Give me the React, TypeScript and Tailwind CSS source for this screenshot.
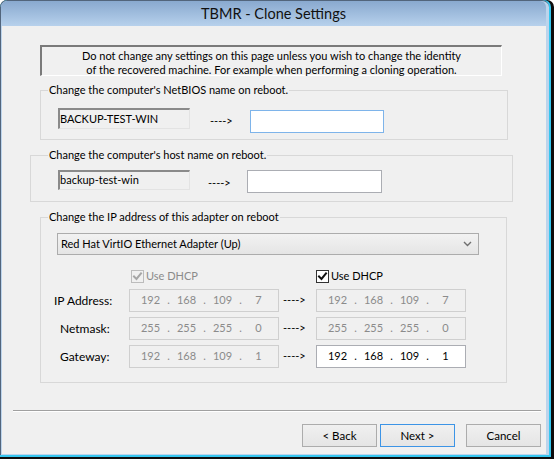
import React from 'react';

const font = "font-['Lato','Liberation_Sans',Arial,sans-serif]";

const Check = ({ color }: { color: string }) => (
  <svg width="11" height="11" viewBox="0 0 11 11" fill="none" stroke={color} strokeWidth="2" strokeLinecap="square">
    <polyline points="2 5.5 4.5 8 9 2.5" />
  </svg>
);

const Chevron = () => (
  <svg width="9" height="6" viewBox="0 0 9 6" fill="none" stroke="#6f6f6f" strokeWidth="1.4">
    <polyline points="1 1 4.5 4.5 8 1" />
  </svg>
);

const Arrow = ({ cls }: { cls: string }) => <span className={`leading-none text-black ${cls}`}>----&gt;</span>;

const IpBox = ({ parts, enabled }: { parts: string[]; enabled?: boolean }) => (
  <div
    className={`flex items-center w-[150px] h-[23px] pl-[4px] border ${
      enabled ? 'bg-white border-[#abadb3] text-black' : 'bg-[#f0f0f0] border-[#cfcfcf] text-[#8b8b8b]'
    }`}
  >
    {parts.map((p, i) => (
      <React.Fragment key={i}>
        <span className="w-[33px] text-center">{p}</span>
        {i < 3 && <span className="w-[3px] text-center">.</span>}
      </React.Fragment>
    ))}
  </div>
);

const rows = [
  { label: 'IP Address:', indent: 'w-[75px]', from: ['192', '168', '109', '7'], to: ['192', '168', '109', '7'], on: false },
  { label: 'Netmask:', indent: 'w-[69px] ml-[6px]', from: ['255', '255', '255', '0'], to: ['255', '255', '255', '0'], on: false },
  { label: 'Gateway:', indent: 'w-[69px] ml-[6px]', from: ['192', '168', '109', '1'], to: ['192', '168', '109', '1'], on: true },
];

export default function App() {
  return (
    <div className={`w-[554px] h-[459px] bg-[#0d0d0d] pr-[3px] pb-[2px] rounded-t-[7px] overflow-hidden ${font}`}>
      <div className="h-full bg-[#35c6ef] pr-[2px] pb-[2px] rounded-t-[7px] overflow-hidden">
        <div className="h-full flex flex-col bg-[#bcd4ec] border-t border-l border-[#52657c] rounded-t-[7px] pr-[3px] pb-[1px]">
          {/* title bar */}
          <div className="h-[25px] shrink-0 flex items-center justify-center bg-gradient-to-b from-[#89a9cf] to-[#b7d1ec] rounded-t-[6px]">
            <span className="text-[14.5px] text-[#111] pt-[1px]">TBMR - Clone Settings</span>
          </div>

          <div className="flex-1 ml-[1px] bg-[#f0f0f0] flex flex-col text-[11px] text-black">
            {/* notice */}
            <div className="mt-[19px] ml-[38px] w-[462px] h-[31px] border-t-2 border-l-2 border-t-[#7a7a7a] border-l-[#7a7a7a] border-b border-r border-b-white border-r-white pt-[2px] text-center leading-[14px]">
              Do not change any settings on this page unless you wish to change the identity
              <br />
              of the recovered machine. For example when performing a cloning operation.
            </div>

            {/* NetBIOS */}
            <fieldset className="mt-[6px] ml-[38px] w-[468px] border border-[#d8d8d8] pb-[6px]">
              <legend className="ml-[7px] px-[1px] leading-[16px]">Change the computer's NetBIOS name on reboot.</legend>
              <div className="flex items-start pl-[17px]">
                <div className="mt-[10px] w-[132px] h-[21px] border-t-2 border-l-2 border-t-[#8a8a8a] border-l-[#8a8a8a] border-b border-r border-b-[#e3e3e3] border-r-[#e3e3e3] leading-[17px]">
                  BACKUP-TEST-WIN
                </div>
                <Arrow cls="mt-[17px] ml-[20px]" />
                <div className="mt-[12px] ml-[17px] w-[134px] h-[23px] bg-white border border-[#7eb4ea]" />
              </div>
            </fieldset>

            {/* host name */}
            <fieldset className="mt-[7px] ml-[28px] w-[483px] border border-[#d8d8d8] pb-[8px]">
              <legend className="ml-[17px] px-[1px] leading-[16px]">Change the computer's host name on reboot.</legend>
              <div className="flex items-start pl-[27px]">
                <div className="mt-[7px] w-[132px] h-[20px] border-t-2 border-l-2 border-t-[#8a8a8a] border-l-[#8a8a8a] border-b border-r border-b-[#e3e3e3] border-r-[#e3e3e3] leading-[16px]">
                  backup-test-win
                </div>
                <Arrow cls="mt-[14px] ml-[18px]" />
                <div className="mt-[7px] ml-[16px] w-[135px] h-[23px] bg-white border border-[#abadb3]" />
              </div>
            </fieldset>

            {/* IP address */}
            <fieldset className="mt-[7px] ml-[38px] w-[467px] border border-[#d8d8d8] pb-[14px]">
              <legend className="ml-[7px] px-[1px] leading-[16px]">Change the IP address of this adapter on reboot</legend>
              <div className="mt-[8px] ml-[16px] w-[422px] h-[22px] flex items-center justify-between pl-[3px] pr-[6px] border border-[#acacac] bg-gradient-to-b from-[#f2f2f2] to-[#e5e5e5]">
                <span>Red Hat VirtIO Ethernet Adapter (Up)</span>
                <Chevron />
              </div>

              <div className="mt-[15px] ml-[90px] flex items-center h-[13px]">
                <div className="w-[185px] flex items-center">
                  <div className="w-[13px] h-[13px] border border-[#bcbcbc] bg-[#f0f0f0] flex items-center justify-center">
                    <Check color="#a6a6a6" />
                  </div>
                  <span className="ml-[2px] text-[#8b8b8b]">Use DHCP</span>
                </div>
                <div className="w-[13px] h-[13px] border border-[#333] bg-white flex items-center justify-center">
                  <Check color="#111" />
                </div>
                <span className="ml-[2px]">Use DHCP</span>
              </div>

              <div className="mt-[6px] flex flex-col gap-[5px]">
                {rows.map((r) => (
                  <div key={r.label} className="flex items-center pl-[13px]">
                    <span className={`${r.indent} text-[12px]`}>{r.label}</span>
                    <IpBox parts={r.from} />
                    <span className="w-[37px] pl-[4px]">
                      ----&gt;
                    </span>
                    <IpBox parts={r.to} enabled={r.on} />
                  </div>
                ))}
              </div>
            </fieldset>

            {/* separator */}
            <div className="mt-[27px] ml-[11px] w-[528px] border-t border-t-[#a0a0a0] border-b border-b-white" />

            {/* buttons */}
            <div className="mt-[12px] flex justify-end gap-[3px] pr-[5px] text-[11.5px]">
              <button className="w-[75px] h-[23px] border border-[#acacac] bg-gradient-to-b from-[#f0f0f0] to-[#e5e5e5]">&lt; Back</button>
              <button className="w-[75px] h-[23px] border border-[#3c94e6] bg-gradient-to-b from-[#f0f0f0] to-[#e5e5e5]">Next &gt;</button>
              <button className="ml-[8px] w-[75px] h-[23px] border border-[#acacac] bg-gradient-to-b from-[#f0f0f0] to-[#e5e5e5]">Cancel</button>
            </div>
          </div>
        </div>
      </div>
    </div>
  );
}
